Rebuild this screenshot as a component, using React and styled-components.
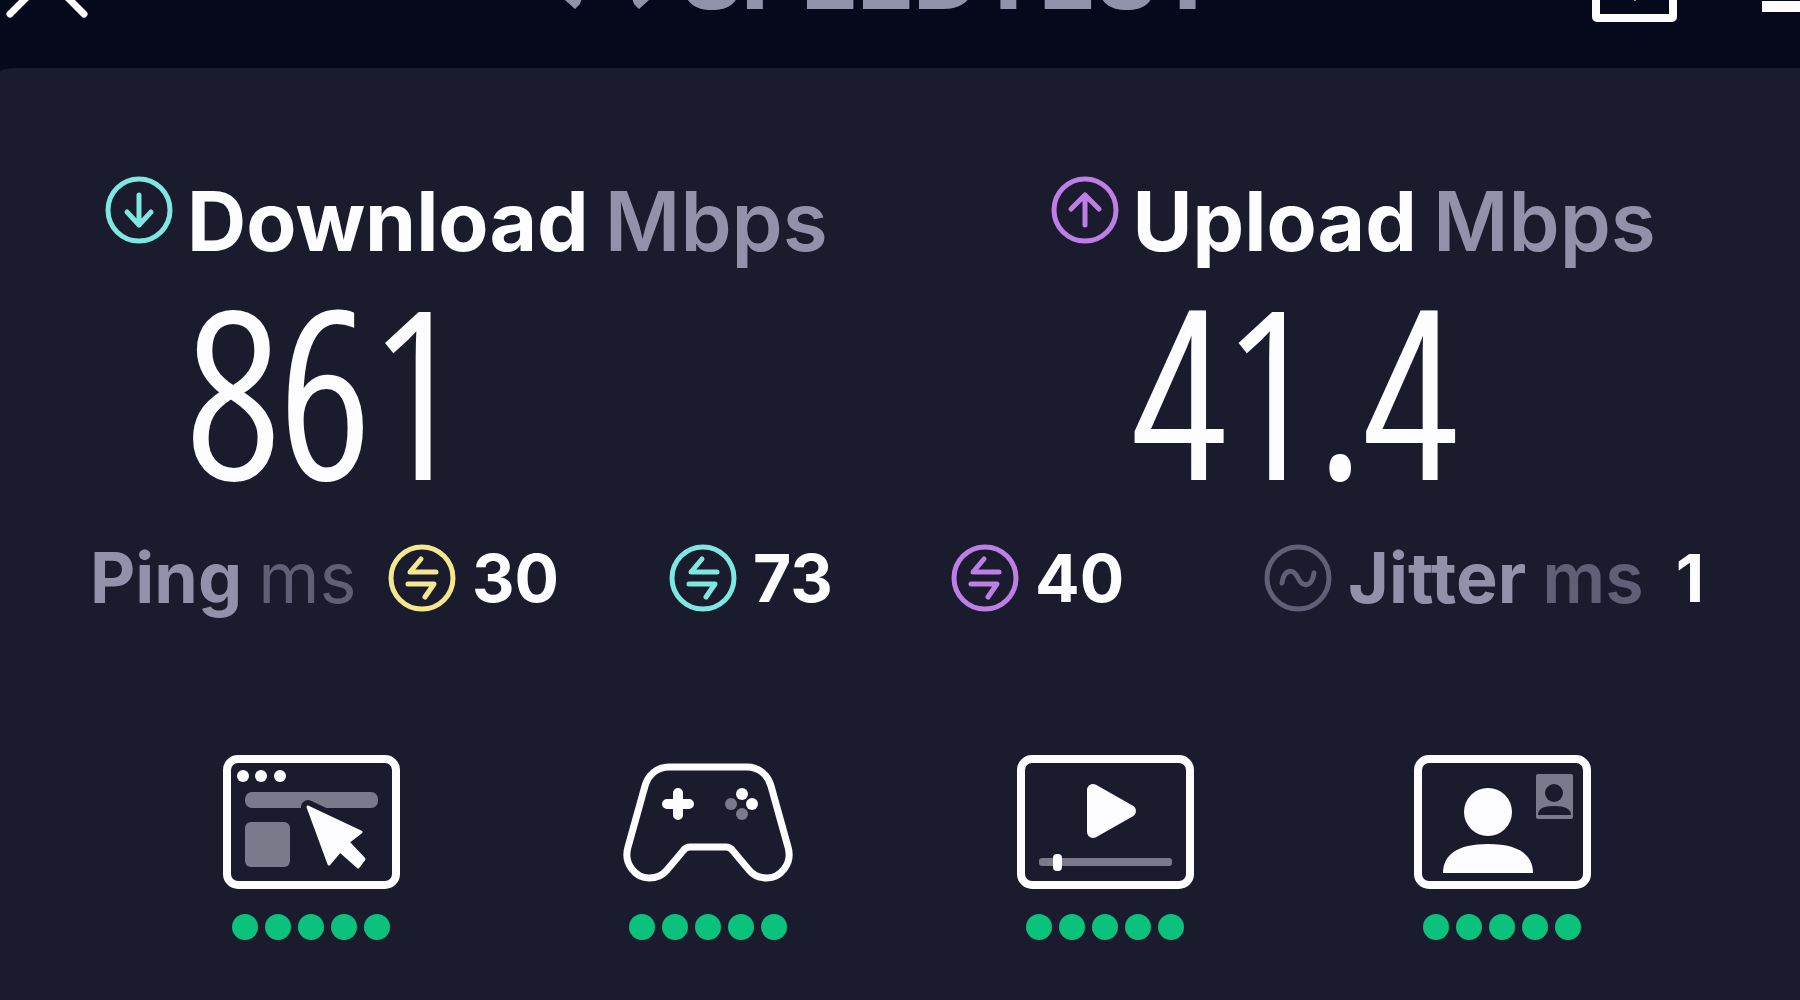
import React from "react";
import styled, { createGlobalStyle } from "styled-components";

const colors = {
  header: "#06091b",
  panel: "#1a1b2d",
  white: "#fdfdff",
  muted: "#9192aa",
  faint: "#5f6076",
  shade: "#7b7a8a",
  green: "#0bc27c",
  teal: "#7ee8e0",
  violet: "#bd7fe6",
  yellow: "#f3e78f",
};

const GlobalStyle = createGlobalStyle`
  * { box-sizing: border-box; }
  body {
    margin: 0;
    overflow: hidden;
    background: ${colors.header};
    font-family: Inter, "Liberation Sans", sans-serif;
  }
`;

const Page = styled.div`
  display: flex;
  flex-direction: column;
  min-height: 100vh;
`;

const Header = styled.header`
  display: flex;
  align-items: flex-end;
  height: 144px;
  margin-top: -76px;
  padding: 0 0 44px 4px;
`;

const IconButton = styled.button`
  display: block;
  padding: 0;
  border: 0;
  background: none;
  color: ${colors.white};
  svg { display: block; }
`;

const Brand = styled.a`
  display: flex;
  align-items: flex-end;
  gap: 24px;
  margin-left: 26%;
  padding-bottom: 2px;
  color: ${colors.muted};
  text-decoration: none;
  svg { display: block; }
`;

const BrandName = styled.span`
  font-size: 92px;
  line-height: 92px;
  font-weight: 800;
`;

const Actions = styled.div`
  display: flex;
  align-items: flex-end;
  gap: 84px;
  margin-left: auto;
`;

const Panel = styled.main`
  flex: 1;
  padding-top: 108px;
  background: ${colors.panel};
  border-radius: 16px 0 0 0 / 4px;
`;

const Results = styled.section`
  display: grid;
  grid-template-columns: 945fr 749fr;
  padding-left: 105px;
`;

const Result = styled.div`
  display: flex;
  align-items: flex-start;
  gap: 14px;
`;

const RoundIcon = styled.svg`
  flex: none;
  width: 68px;
  height: 68px;
  fill: none;
  stroke: ${(p) => p.$color};
  stroke-width: 5;
  stroke-linecap: round;
  stroke-linejoin: round;
`;

const ResultLabel = styled.h2`
  display: flex;
  gap: 16px;
  margin: 0;
  color: ${colors.white};
  font-size: 82px;
  line-height: 92px;
  font-weight: 700;
`;

const Unit = styled.span`
  color: ${(p) => p.$color};
  font-weight: ${(p) => p.$weight};
`;

const ResultValue = styled.div`
  color: ${colors.white};
  font-family: "Open Sans Condensed Light", "Open Sans Condensed", "Open Sans", sans-serif;
  font-size: 230px;
  line-height: 242px;
  font-weight: 300;
  -webkit-text-stroke: 4px ${colors.white};
`;

const Latency = styled.section`
  display: grid;
  grid-template-columns: 298fr 281fr 282fr 313fr 536fr;
  align-items: center;
  margin-top: 34px;
  padding-left: 90px;
  font-size: 70px;
  line-height: 66px;
`;

const LatencyItem = styled.div`
  display: flex;
  align-items: center;
  gap: 16px;
  color: ${colors.muted};
  font-weight: 700;
`;

const Value = styled.span`
  color: ${colors.white};
  font-size: 66px;
  padding-left: ${(p) => (p.$spaced ? 16 : 0)}px;
`;

const Activities = styled.section`
  display: grid;
  grid-template-columns: repeat(4, 1fr);
  margin-top: 142px;
  padding: 0 100px 0 112px;
`;

const Activity = styled.div`
  display: flex;
  flex-direction: column;
  align-items: center;
  gap: 24px;
`;

const Picture = styled.svg`
  width: 180px;
  height: 136px;
  fill: none;
`;

const Rating = styled.div`
  display: flex;
  gap: 7px;
`;

const Dot = styled.span`
  width: 26px;
  height: 26px;
  border-radius: 50%;
  background: ${colors.green};
`;

function TransferIcon({ color }) {
  return (
    <RoundIcon viewBox="0 0 68 68" $color={color} aria-hidden="true">
      <circle cx="34" cy="34" r="31" />
      <path d="M48 28H22L33 15M20 40H46L37 53" />
    </RoundIcon>
  );
}

function Frame() {
  return <rect x="6" y="5" width="169" height="126" rx="11" stroke={colors.white} strokeWidth="8" />;
}

function BrowsingPicture() {
  return (
    <Picture viewBox="0 0 180 136">
      <Frame />
      <g fill={colors.white}>
        <circle cx="22" cy="22" r="6" />
        <circle cx="40" cy="22" r="6" />
        <circle cx="59" cy="22" r="6" />
      </g>
      <rect x="24" y="38" width="133" height="16" rx="7" fill={colors.shade} />
      <rect x="24" y="68" width="45" height="45" rx="6" fill={colors.shade} />
      <path
        d="M87 53L140 78L127 88L143 105L137 113L119 97L108 110Z"
        fill={colors.panel}
        stroke={colors.panel}
        strokeWidth="14"
        strokeLinejoin="round"
      />
      <path
        d="M87 53L140 78L127 88L143 105L137 113L119 97L108 110Z"
        fill={colors.white}
        stroke={colors.white}
        strokeWidth="3"
        strokeLinejoin="round"
      />
    </Picture>
  );
}

function GamingPicture() {
  return (
    <Picture viewBox="0 0 180 136">
      <path
        d="M51 13H129C141 13 150 21 153 32L170 93C175 110 162 124 149 124C141 124 135 121 131 116L115 97C113 94 111 93 108 93H72C69 93 67 94 65 97L49 116C45 121 39 124 31 124C18 124 5 110 10 93L27 32C30 21 39 13 51 13Z"
        stroke={colors.white}
        strokeWidth="7"
      />
      <path d="M60 39V61M49 50H71" stroke={colors.white} strokeWidth="10" strokeLinecap="round" />
      <circle cx="124" cy="40" r="6" fill={colors.white} />
      <circle cx="134" cy="50" r="6" fill={colors.white} />
      <circle cx="113" cy="50" r="6" fill={colors.shade} />
      <circle cx="124" cy="60" r="6" fill={colors.shade} />
    </Picture>
  );
}

function StreamingPicture() {
  return (
    <Picture viewBox="0 0 180 136">
      <Frame />
      <path
        d="M78 36V78L115 57Z"
        fill={colors.white}
        stroke={colors.white}
        strokeWidth="12"
        strokeLinejoin="round"
      />
      <rect x="24" y="104" width="133" height="8" rx="3" fill={colors.shade} />
      <rect x="38" y="100" width="9" height="17" rx="4" fill={colors.white} />
    </Picture>
  );
}

function VideoCallPicture() {
  return (
    <Picture viewBox="0 0 180 136">
      <Frame />
      <circle cx="76" cy="58" r="24" fill={colors.white} />
      <path d="M31 119C31 101 45 90 76 90S121 101 121 119Z" fill={colors.white} />
      <rect x="124" y="20" width="37" height="45" rx="2" fill={colors.shade} />
      <circle cx="142" cy="39" r="9" fill={colors.panel} />
      <path d="M126 61C126 55 131 52 142 52S159 55 159 61Z" fill={colors.panel} />
    </Picture>
  );
}

const activities = [
  { name: "Browsing", Image: BrowsingPicture },
  { name: "Gaming", Image: GamingPicture },
  { name: "Streaming", Image: StreamingPicture },
  { name: "Video call", Image: VideoCallPicture },
];

const pings = [
  { value: 30, color: colors.yellow },
  { value: 73, color: colors.teal },
  { value: 40, color: colors.violet },
];

const results = [
  { label: "Download", value: "861", color: colors.teal, arrow: "M34 19V49M22 36L34 49L46 36" },
  { label: "Upload", value: "41.4", color: colors.violet, arrow: "M34 49V19M20 33L34 19L48 33" },
];

export default function App() {
  return (
    <Page>
      <GlobalStyle />
      <Header>
        <IconButton aria-label="Close">
          <svg width="86" height="86" viewBox="0 0 86 86" stroke="currentColor" strokeWidth="7" strokeLinecap="round">
            <path d="M6 2L80 76M80 2L6 76" />
          </svg>
        </IconButton>
        <Brand href="#" aria-label="Speedtest">
          <svg width="100" height="72" viewBox="0 0 100 72" fill="currentColor">
            <path d="M18 59L8 50C-4 36 4 4 50 4S104 36 92 50L82 59L77 54L75 48C90 36 82 16 50 16S10 36 25 48L23 54Z" />
          </svg>
          <BrandName>SPEEDTEST</BrandName>
        </Brand>
        <Actions>
          <IconButton aria-label="Share">
            <svg width="86" height="90" viewBox="0 0 86 90" fill="none" stroke="currentColor">
              <rect x="4" y="4" width="77" height="80" rx="1" strokeWidth="8" />
              <path d="M43 30V64M34 56L43 65L52 56" strokeWidth="3" />
            </svg>
          </IconButton>
          <IconButton aria-label="Menu">
            <svg width="38" height="90" viewBox="0 0 38 90" fill="currentColor">
              <rect y="8" width="60" height="11" />
              <rect y="37" width="60" height="11" />
              <rect y="67" width="60" height="11" />
            </svg>
          </IconButton>
        </Actions>
      </Header>
      <Panel>
        <Results>
          {results.map((r) => (
            <Result key={r.label}>
              <RoundIcon viewBox="0 0 68 68" $color={r.color} aria-hidden="true">
                <circle cx="34" cy="34" r="31" />
                <path d={r.arrow} />
              </RoundIcon>
              <div>
                <ResultLabel>
                  {r.label}
                  <Unit $color={colors.muted} $weight={600}>Mbps</Unit>
                </ResultLabel>
                <ResultValue>{r.value}</ResultValue>
              </div>
            </Result>
          ))}
        </Results>
        <Latency>
          <LatencyItem>
            Ping
            <Unit $color={colors.faint} $weight={400}>ms</Unit>
          </LatencyItem>
          {pings.map((p) => (
            <LatencyItem key={p.value}>
              <TransferIcon color={p.color} />
              <Value>{p.value}</Value>
            </LatencyItem>
          ))}
          <LatencyItem>
            <RoundIcon viewBox="0 0 68 68" $color={colors.faint} aria-hidden="true">
              <circle cx="34" cy="34" r="31" />
              <path d="M18 39C20 25 29 24 34 34S48 43 50 29" />
            </RoundIcon>
            Jitter
            <Unit $color={colors.faint} $weight={600}>ms</Unit>
            <Value $spaced>1</Value>
          </LatencyItem>
        </Latency>
        <Activities>
          {activities.map(({ name, Image }) => (
            <Activity key={name} role="img" aria-label={`${name}: 5 of 5`}>
              <Image />
              <Rating>
                {[1, 2, 3, 4, 5].map((n) => (
                  <Dot key={n} />
                ))}
              </Rating>
            </Activity>
          ))}
        </Activities>
      </Panel>
    </Page>
  );
}
